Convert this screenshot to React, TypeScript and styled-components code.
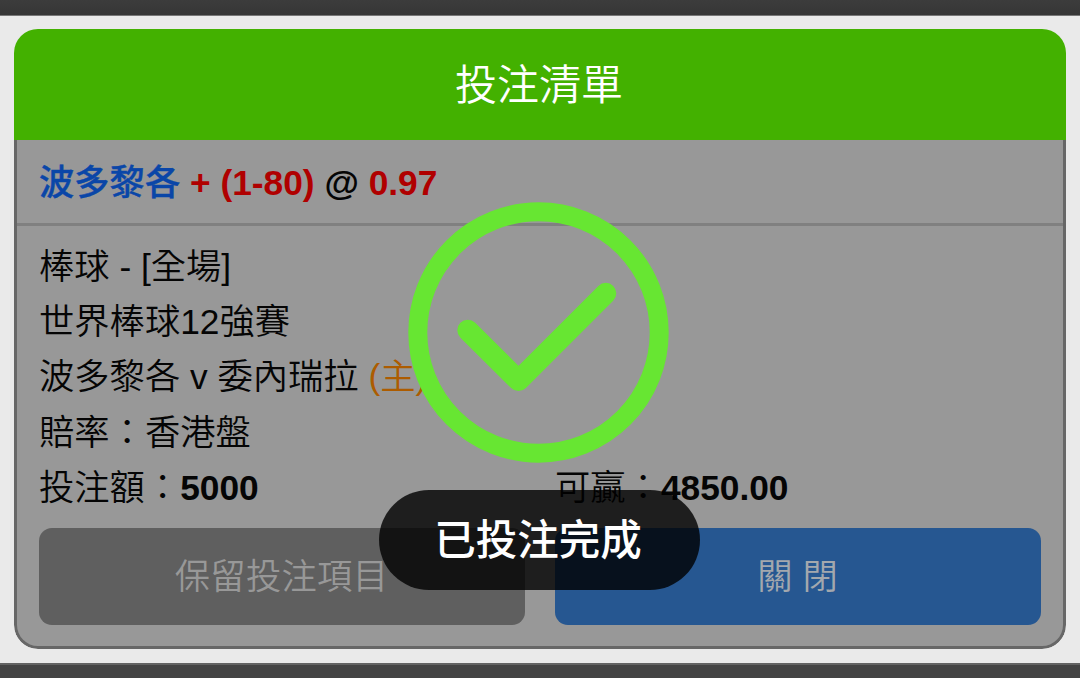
import { FC } from 'react';
import styled, { createGlobalStyle } from 'styled-components';

interface TextProps {
  $color?: string;
}

interface ActionButtonProps {
  $color: string;
  $textColor: string;
  $spacing?: string;
}

const GlobalStyle = createGlobalStyle`
  * {
    box-sizing: border-box;
  }

  body {
    margin: 0;
    overflow: hidden;
    background-color: #eaeaea;
    font-family: 'Liberation Sans', 'Noto Sans CJK TC', sans-serif;
    color: #050505;
  }
`;

const Page = styled.div`
  position: relative;
  display: flex;
  flex-direction: column;
  width: 1080px;
  height: 678px;
  background-color: #eaeaea;
`;

const TopBar = styled.div`
  height: 16px;
  flex: none;
  background: linear-gradient(#3c3c3c, #363636);
  border-bottom: 1px solid #777777;
`;

const BottomBar = styled.div`
  height: 15px;
  flex: none;
  margin-top: auto;
  background-color: #444444;
  border-top: 2px solid #636363;
`;

const BetCard = styled.div`
  display: flex;
  flex-direction: column;
  margin: 13px 14px 0;
  height: 620px;
  border-radius: 24px;
  overflow: hidden;
`;

const CardTitle = styled.div`
  flex: none;
  display: flex;
  align-items: center;
  justify-content: center;
  height: 111px;
  background-color: #43b100;
  color: white;
  font-size: 42px;
  font-weight: 350;
  line-height: 60px;
  padding: 3px 2px 0 0;
`;

const CardContent = styled.div`
  flex: 1;
  border: 3px solid #676767;
  border-top: none;
  border-radius: 0 0 24px 24px;
  background-color: #989898;
`;

const Selection = styled.div`
  display: flex;
  align-items: baseline;
  height: 86px;
  line-height: 85px;
  padding-left: 22px;
  border-bottom: 3px solid #808080;
  font-size: 35.3px;
  font-weight: 700;
  white-space: pre;
`;

const TeamName = styled.span`
  color: #0a46a8;
  font-weight: 500;
  -webkit-text-stroke: 0.4px #0a46a8;
`;

const Accent = styled.span<TextProps>`
  color: ${({ $color }) => $color};
`;

const Details = styled.div`
  padding: 13px 22px 0;
  font-size: 35.3px;
  font-weight: 350;
`;

const Line = styled.div`
  display: grid;
  grid-template-columns: 1fr 1fr;
  column-gap: 30px;
  height: 55.2px;
  line-height: 55.2px;
  white-space: nowrap;
`;

const Amount = styled.b`
  font-weight: 700;
`;

const Actions = styled.div`
  display: grid;
  grid-template-columns: 1fr 1fr;
  column-gap: 30px;
  padding: 13px 22px 0;
`;

const ActionButton = styled.button<ActionButtonProps>`
  height: 97px;
  border: none;
  border-radius: 13px;
  padding: 0 1px 6px 0;
  background-color: ${({ $color }) => $color};
  color: ${({ $textColor }) => $textColor};
  font-family: inherit;
  font-size: 35.3px;
  font-weight: 350;
  letter-spacing: ${({ $spacing }) => $spacing || 'normal'};
  cursor: pointer;
`;

const SuccessIcon = styled.svg`
  position: absolute;
  left: 408px;
  top: 202px;
  width: 261px;
  height: 261px;
`;

const Toast = styled.div`
  position: absolute;
  left: 379px;
  top: 490px;
  width: 321px;
  height: 100px;
  display: flex;
  align-items: center;
  justify-content: center;
  padding: 0 3px 6px 0;
  border-radius: 50px;
  background-color: rgba(0, 0, 0, 0.8);
  color: white;
  font-size: 41.5px;
  font-weight: 500;
`;

const App: FC = () => {
  return (
    <>
      <GlobalStyle />
      <Page>
        <TopBar />
        <BetCard>
          <CardTitle>投注清單</CardTitle>
          <CardContent>
            <Selection>
              <TeamName>波多黎各</TeamName>
              <Accent $color="#b00000"> + (1-80)</Accent>
              <span> @ </span>
              <Accent $color="#b00000">0.97</Accent>
            </Selection>
            <Details>
              <Line>棒球 - [全場]</Line>
              <Line>世界棒球12強賽</Line>
              <Line>
                <span>
                  波多黎各 v 委內瑞拉 <Accent $color="#ad5c00">(主)</Accent>
                </span>
              </Line>
              <Line>賠率：香港盤</Line>
              <Line>
                <span>
                  投注額：<Amount>5000</Amount>
                </span>
                <span>
                  可贏：<Amount>4850.00</Amount>
                </span>
              </Line>
            </Details>
            <Actions>
              <ActionButton $color="#5f5f5f" $textColor="#989898" $spacing="0.3px">
                保留投注項目
              </ActionButton>
              <ActionButton $color="#265791" $textColor="#a3a8ae">
                關 閉
              </ActionButton>
            </Actions>
          </CardContent>
        </BetCard>
        <BottomBar />
        <SuccessIcon viewBox="0 0 261 261" fill="none" stroke="#67e632">
          <circle cx="130.5" cy="130.5" r="120.7" strokeWidth="19" />
          <path
            d="M59.8 128.2L110.5 178.6L197.8 91.3"
            strokeWidth="21"
            strokeLinecap="round"
            strokeLinejoin="round"
          />
        </SuccessIcon>
        <Toast>已投注完成</Toast>
      </Page>
    </>
  );
};

export default App;
